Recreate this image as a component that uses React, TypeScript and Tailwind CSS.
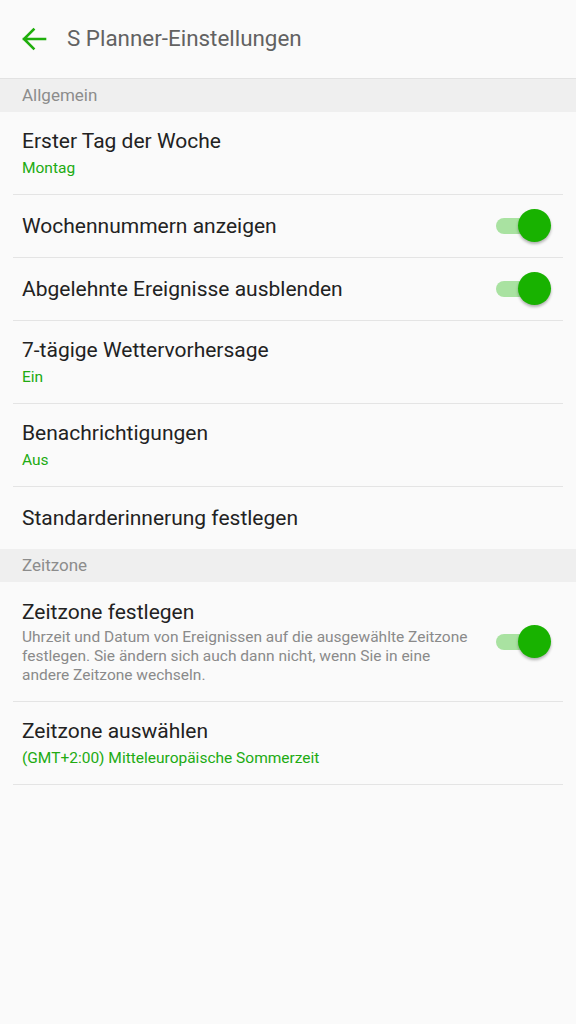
import React from 'react';

const GREEN = 'text-[#21ab12]';

function Toggle() {
  return (
    <div className="relative w-[56px] h-[34px] shrink-0">
      <div className="absolute left-[-1px] top-[9px] w-[47px] h-[16px] rounded-full bg-[#a9e2a1]" />
      <div className="absolute right-[2px] top-0 w-[33px] h-[33px] rounded-full bg-[#18b200] shadow-[0_2px_3px_rgba(0,0,0,0.3)]" />
    </div>
  );
}

function Section({ label }: { label: string }) {
  return (
    <div className="h-[33px] bg-[#efefef] flex items-center px-[22px]">
      <span className="text-[17px] text-[#8c8c8c]">{label}</span>
    </div>
  );
}

interface RowProps {
  title: string;
  value?: string;
  toggle?: boolean;
}

function Row({ title, value, toggle }: RowProps) {
  return (
    <div className="mx-[13px] border-b border-[#e4e4e4]">
      <div
        className={`flex items-center justify-between pl-[9px] pr-[10px] ${value ? 'h-[82px]' : 'h-[62px]'}`}
      >
        <div className="flex flex-col">
          <span className="text-[21px] leading-[27px] text-[#222]">{title}</span>
          {value && <span className={`text-[15.5px] leading-[20px] mt-[3px] ${GREEN}`}>{value}</span>}
        </div>
        {toggle && <Toggle />}
      </div>
    </div>
  );
}

export default function App() {
  return (
    <div className="w-[576px] h-[1024px] bg-[#fafafa] font-['Roboto',sans-serif]">
      <div className="h-[79px] flex items-center border-b border-[#e2e2e2]">
        <svg className="ml-[21px]" width="26" height="24" viewBox="0 0 26 24" fill="none">
          <path d="M24 12H3M12.5 2.5L3 12l9.5 9.5" stroke="#1fae0c" strokeWidth="2.6" strokeLinecap="square" />
        </svg>
        <span className="ml-[20px] text-[22.4px] text-[#626262]">S Planner-Einstellungen</span>
      </div>
      <Section label="Allgemein" />
      <Row title="Erster Tag der Woche" value="Montag" />
      <Row title="Wochennummern anzeigen" toggle />
      <Row title="Abgelehnte Ereignisse ausblenden" toggle />
      <Row title="7-tägige Wettervorhersage" value="Ein" />
      <Row title="Benachrichtigungen" value="Aus" />
      <div className="mx-[13px]">
        <div className="h-[62px] flex items-center pl-[9px]">
          <span className="text-[21px] leading-[27px] text-[#222]">Standarderinnerung festlegen</span>
        </div>
      </div>
      <Section label="Zeitzone" />
      <div className="mx-[13px] border-b border-[#e4e4e4]">
        <div className="h-[119px] flex items-center justify-between pl-[9px] pr-[10px]">
          <div className="flex flex-col w-[455px]">
            <span className="text-[21px] leading-[27px] text-[#222]">Zeitzone festlegen</span>
            <span className="text-[15.5px] leading-[19px] mt-[2px] text-[#8a8a8a]">
              Uhrzeit und Datum von Ereignissen auf die ausgewählte Zeitzone festlegen. Sie ändern sich auch dann nicht, wenn Sie in eine andere Zeitzone wechseln.
            </span>
          </div>
          <Toggle />
        </div>
      </div>
      <Row title="Zeitzone auswählen" value="(GMT+2:00) Mitteleuropäische Sommerzeit" />
    </div>
  );
}
